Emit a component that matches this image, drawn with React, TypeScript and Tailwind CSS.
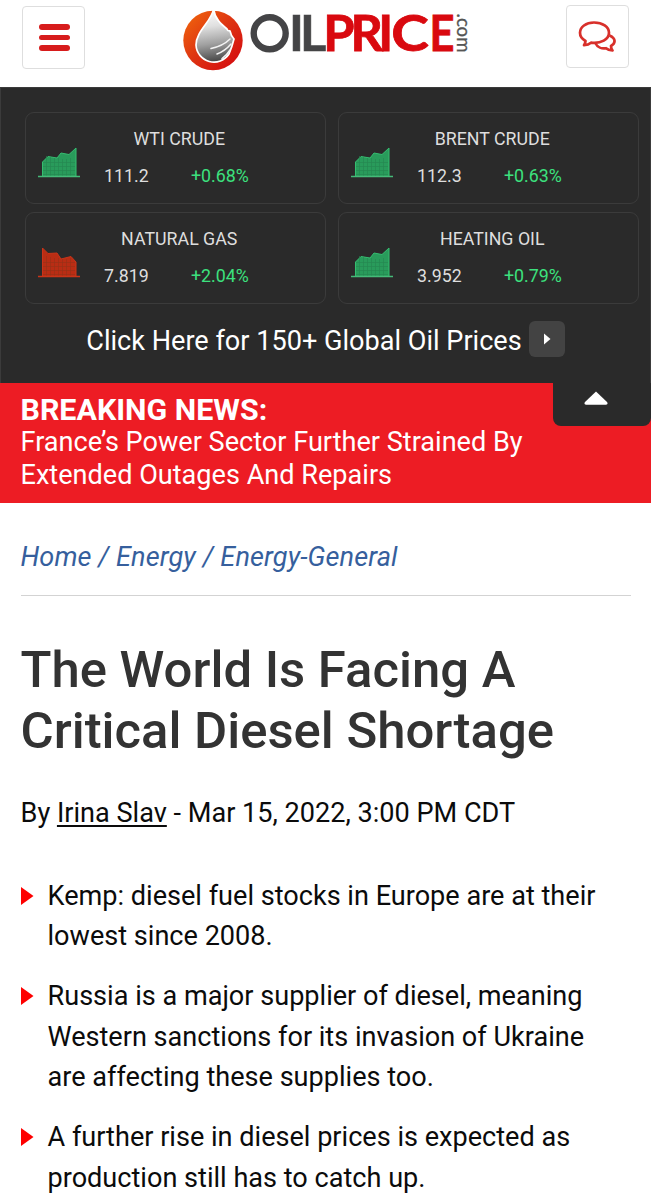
type Quote = {
    name: string;
    price: string;
    change: string;
    down?: boolean;
};

const quotes: Quote[] = [
    { name: 'WTI CRUDE', price: '111.2', change: '+0.68%' },
    { name: 'BRENT CRUDE', price: '112.3', change: '+0.63%' },
    { name: 'NATURAL GAS', price: '7.819', change: '+2.04%', down: true },
    { name: 'HEATING OIL', price: '3.952', change: '+0.79%' },
];

const highlights = [
    ['Kemp: diesel fuel stocks in Europe are at their', 'lowest since 2008.'],
    ['Russia is a major supplier of diesel, meaning', 'Western sanctions for its invasion of Ukraine', 'are affecting these supplies too.'],
    ['A further rise in diesel prices is expected as', 'production still has to catch up.'],
];

function Logo() {
    return (
        <svg width="300" height="76" viewBox="0 0 300 76" className="block" aria-label="Oilprice.com">
            <defs>
                <linearGradient id="ball" x1="0" y1="0" x2="1" y2="1">
                    <stop offset="0" stopColor="#f26a0c" />
                    <stop offset="0.5" stopColor="#dd3212" />
                    <stop offset="1" stopColor="#d3050f" />
                </linearGradient>
                <linearGradient id="drop" x1="0.4" y1="0" x2="0.5" y2="1">
                    <stop offset="0" stopColor="#fff" />
                    <stop offset="0.32" stopColor="#e0e0e0" />
                    <stop offset="0.65" stopColor="#a0a0a0" />
                    <stop offset="1" stopColor="#444" />
                </linearGradient>
            </defs>
            <circle cx="31" cy="40.5" r="29.7" fill="url(#ball)" />
            <path d="M31.5 9C30 21 14 31 14 45A18 18 0 0 0 47 54Q50 47 52 39C50 37 49 36 48 31C46 30 46 32 45 29C39 24 33 19 31.5 9Z" fill="url(#drop)" stroke="#fff" strokeWidth="1.7" />
            <path d="M29 48.5Q41 46 48 39M35 54Q43 51 49 44M40 58.5Q45 55 48 50" fill="none" stroke="#f3f3f3" strokeWidth="1.5" strokeLinecap="round" />
            <circle cx="87.7" cy="33.3" r="16" fill="none" stroke="#444446" strokeWidth="6.4" />
            <text x="107 118" y="51.4" fontSize="50.5" fontWeight="700" fill="#444446" stroke="#444446" strokeWidth="0.6" className="font-['Lato',sans-serif]">IL</text>
            <g fontSize="50.5" fontWeight="700" fill="#d9090f" stroke="#d9090f" strokeWidth="0.8" className="font-['Lato',sans-serif]">
                <text x="141.2 168.4 196.2" y="51.4">PRI</text>
                <text x="209.2" y="51.4" textLength="37.5" lengthAdjust="spacingAndGlyphs">C</text>
                <text x="247.5" y="51.4" textLength="25" lengthAdjust="spacingAndGlyphs">E</text>
            </g>
            <text transform="translate(275.2 13.5) rotate(90)" fontSize="20" fill="#555" stroke="#555" strokeWidth="0.3" textLength="39" lengthAdjust="spacingAndGlyphs" className="font-['Lato',sans-serif]">.com</text>
        </svg>
    );
}

function TrendChart({ down }: { down?: boolean }) {
    const line = down
        ? 'M4.5 29V1L10 6.5L19 6L23 12L33 9.5L38 15V29'
        : 'M4.5 29V15L10 9.5L19 11L23 6L31 7.5L38 1V29';
    const color = down ? '#b92d14' : '#299b5b';
    return (
        <svg width="42" height="31" viewBox="0 0 42 31" className="block shrink-0">
            <path d={line} fill={color} stroke={down ? '#c93418' : '#35bd70'} strokeWidth="1" />
            <path
                d="M8.5 9V29M12.5 10V29M16.5 11V29M20.5 11V29M24.5 12V29M28.5 12V29M32.5 11V29M5 15.5H37M5 19.5H37M5 23.5H37M5 27.5H37"
                stroke={down ? '#963018' : '#258650'}
                strokeWidth="0.6"
            />
            <path d="M0 29.5H42" stroke={down ? '#c93418' : '#45ba78'} strokeWidth="1.4" />
        </svg>
    );
}

function QuoteCard({ quote }: { quote: Quote }) {
    return (
        <div className="flex h-[92px] rounded-[9px] border border-[#3b3b3b] pl-3 pt-[15px]">
            <div className="pt-[19px]">
                <TrendChart down={quote.down} />
            </div>
            <div className="w-[198.5px] text-[17.8px] leading-[22px] text-[#dedede]">
                <div className="text-center">{quote.name}</div>
                <div className="mt-[14.5px] flex pl-6">
                    <span className="w-[87px]">{quote.price}</span>
                    <span className="text-[#3ce17e]">{quote.change}</span>
                </div>
            </div>
        </div>
    );
}

export default function App() {
    return (
        <div className="h-[1200px] w-[651px] overflow-hidden bg-white font-['Roboto',sans-serif] text-[27.1px] text-[#0b0b0b]">
            <header className="flex h-[87px] items-start justify-between px-[22px]">
                <button className="mt-1.5 flex size-[63px] flex-col items-center justify-center gap-[5px] rounded-[4px] border-[1.5px] border-[#dedede] pl-[1px]">
                    <span className="h-[5.5px] w-[31px] rounded-full bg-[#d71c1c]" />
                    <span className="h-[5.5px] w-[31px] rounded-full bg-[#d71c1c]" />
                    <span className="h-[5.5px] w-[31px] rounded-full bg-[#d71c1c]" />
                </button>
                <div className="ml-[12px]">
                    <Logo />
                </div>
                <button className="mt-[5px] flex size-[63px] items-center justify-center rounded-[4px] border-[1.5px] border-[#dedede] pr-[3px]">
                    <svg width="39" height="33" viewBox="0 0 39 33" fill="none" stroke="#d8302b" strokeWidth="2.7" strokeLinejoin="round">
                        <path d="M17 2.5C9 2.5 3 7 3 12.8C3 16 5 19 8.5 21C8.3 22.8 7.8 24.2 7 25.2C10 25 12.3 24.2 14 22.7C24 24 32 19.3 32 12.8C32 7 25.5 2.5 17 2.5Z" />
                        <path d="M32.5 15.5C39.5 18.5 38.5 23.5 34 26C34 28 34.5 29.2 35.5 30.5C32.5 30.3 30.5 29.6 29 28.2C25 29 20.5 27.5 18.5 23.2" />
                    </svg>
                </button>
            </header>

            <section className="h-[296px] border-x border-t border-[#3b3b3b] bg-[#2a2a2a] pl-6 pr-[11px] pt-6">
                <div className="grid grid-cols-[301px_301px] justify-between gap-y-[8.4px]">
                    {quotes.map((quote) => (
                        <QuoteCard key={quote.name} quote={quote} />
                    ))}
                </div>
                <div className="-ml-[13px] mt-[16.6px] flex items-center justify-center gap-[7px] text-white">
                    <span className="whitespace-nowrap leading-9">Click Here for 150+ Global Oil Prices</span>
                    <span className="mb-1 flex size-9 items-center justify-center rounded-[6px] bg-[#434343]">
                        <svg width="8" height="12" viewBox="0 0 8 12">
                            <path d="M1 0.5L7.5 6L1 11.5Z" fill="#fff" />
                        </svg>
                    </span>
                </div>
            </section>

            <section className="flex h-[120px] items-start justify-between bg-[#ed1c24] pl-[20.5px] text-white">
                <div className="whitespace-nowrap pt-[10.5px] leading-[32.6px]">
                    <div className="text-[30.4px] font-bold">BREAKING NEWS:</div>
                    <div>France’s Power Sector Further Strained By</div>
                    <div>Extended Outages And Repairs</div>
                </div>
                <button className="flex h-[43px] w-[98px] justify-center rounded-b-[8px] bg-[#2a2a2a] pr-[13px] pt-[7.5px]">
                    <svg width="24" height="14" viewBox="0 0 24 14">
                        <path d="M12 0.5L23 11Q24.5 13.5 22 13.7H2Q-0.5 13.5 1 11Z" fill="#fff" />
                    </svg>
                </button>
            </section>

            <main className="px-[20.5px]">
                <nav className="mt-[34px] h-[59px] border-b-[1.5px] border-[#d3d3d3] italic leading-10 tracking-[0.1px] text-[#365f9d]">
                    Home / Energy / Energy-General
                </nav>
                <h1 className="mt-[42.5px] whitespace-nowrap text-[50.85px] font-medium leading-[61px] text-[#333]">
                    The World Is Facing A<br />
                    Critical Diesel Shortage
                </h1>
                <p className="mt-[32.5px] leading-10">
                    By <a className="underline decoration-2 underline-offset-[3px]">Irina Slav</a> - Mar 15, 2022, 3:00 PM CDT
                </p>
                <ul className="mt-[42.6px] space-y-[18.9px]">
                    {highlights.map((lines) => (
                        <li key={lines[0]} className="flex">
                            <svg width="13" height="18" viewBox="0 0 13 18" className="mr-[14px] mt-[11px] shrink-0">
                                <path d="M0 0L12.5 9L0 18Z" fill="#fe0000" />
                            </svg>
                            <div className="whitespace-nowrap leading-[40.7px]">
                                {lines.map((line) => (
                                    <div key={line}>{line}</div>
                                ))}
                            </div>
                        </li>
                    ))}
                </ul>
            </main>
        </div>
    );
}
